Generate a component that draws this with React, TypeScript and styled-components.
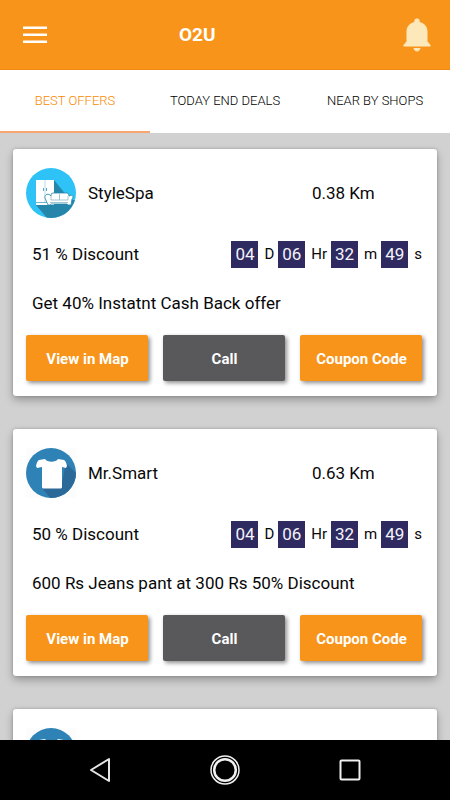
import React from "react";
import styled, { createGlobalStyle } from "styled-components";

const ORANGE = "#f8941a";

const GlobalStyle = createGlobalStyle`
  * { box-sizing: border-box; }
  body { margin: 0; background: #d1d1d1; font-family: Roboto, "Liberation Sans", sans-serif; color: #080808; }
  button { font-family: inherit; border: 0; padding: 0; background: none; cursor: pointer; }
  svg { display: block; }
`;

const Screen = styled.div`
  display: flex;
  flex-direction: column;
  height: 100vh;
`;

const AppBar = styled.header`
  display: grid;
  grid-template-columns: 156px 1fr 28px;
  align-items: center;
  justify-items: start;
  height: 70px;
  flex: none;
  padding: 0 19px 0 23px;
  background: ${ORANGE};
  border-bottom: 1px solid #ee8a12;
`;

const IconButton = styled.button`
  color: #f0f0f0;
`;

const Title = styled.h1`
  margin: 0;
  font-size: 19px;
  line-height: 24px;
  font-weight: 700;
  color: #fff;
`;

const Tabs = styled.nav`
  display: grid;
  grid-template-columns: repeat(3, 1fr);
  height: 63px;
  flex: none;
  background: #fff;
`;

const Tab = styled.button<{ $active?: boolean }>`
  font-size: 13px;
  line-height: 16px;
  font-weight: 300;
  color: ${(p) => (p.$active ? "#f88a00" : "#000")};
  border-bottom: 2px solid ${(p) => (p.$active ? "#f9a570" : "#fff")};
`;

const Offers = styled.main`
  flex: 1;
  min-height: 0;
  overflow: hidden;
  display: flex;
  flex-direction: column;
  gap: 33px;
  padding: 16px 13px;
`;

const Card = styled.article`
  flex: none;
  padding: 19px 15px 15px 13px;
  background: #fff;
  border-radius: 3px;
  box-shadow: 0 4px 8px rgba(0, 0, 0, 0.28), 0 0 3px rgba(0, 0, 0, 0.2);
`;

const CardHead = styled.div`
  display: grid;
  grid-template-columns: 50px 1fr 110px;
  column-gap: 12px;
  align-items: center;
  height: 50px;
`;

const Text = styled.span`
  font-size: 17px;
  line-height: 25px;
`;

const ShopName = styled.h2`
  margin: 0;
  font-size: 17px;
  line-height: 25px;
  font-weight: 400;
`;

const Details = styled.div`
  display: flex;
  justify-content: space-between;
  align-items: center;
  height: 72px;
  padding-left: 6px;
`;

const Countdown = styled.div`
  display: flex;
  align-items: center;
  gap: 4px;
`;

const Slot = styled.span`
  display: flex;
  align-items: center;
  gap: 6px;
  font-size: 15px;
  line-height: 20px;
`;

const Digits = styled.span`
  width: 27px;
  height: 27px;
  font-size: 17px;
  line-height: 27px;
  text-align: center;
  color: #f4f3fa;
  background: #2f2a60;
`;

const Offer = styled.p`
  margin: 0;
  padding-left: 6px;
  font-size: 17px;
  line-height: 27px;
`;

const Actions = styled.div`
  display: grid;
  grid-template-columns: repeat(3, 1fr);
  gap: 15px;
  margin-top: 18px;
`;

const Action = styled.button<{ $dark?: boolean }>`
  height: 46px;
  padding: 2px 0 0 1px;
  font-size: 15px;
  line-height: 20px;
  font-weight: 700;
  color: #fff;
  background: ${(p) => (p.$dark ? "#59595b" : ORANGE)};
  border-radius: 2px;
  box-shadow: 2px 2px 4px rgba(0, 0, 0, 0.45);
`;

const SystemBar = styled.footer`
  display: grid;
  grid-template-columns: repeat(3, 125px);
  justify-content: center;
  align-items: center;
  justify-items: center;
  height: 60px;
  flex: none;
  background: #000;
`;

const SofaLogo = () => (
  <svg width="50" height="50" viewBox="0 0 50 50" aria-hidden="true">
    <defs>
      <clipPath id="sofa-disc"><circle cx="25" cy="25" r="25" /></clipPath>
    </defs>
    <g clipPath="url(#sofa-disc)">
      <rect width="50" height="50" fill="#2fc2f6" />
      <path d="M28 12l13 16 5 4 4 0v18H21L10 37z" fill="#2686aa" />
      <rect x="10" y="12" width="18" height="25" fill="#fff" />
      <path d="M10 34.500h12" stroke="#6fb6cf" />
      <path d="M19 12v22" stroke="#b4dce8" />
      <path d="M17.500 20v3M20.500 20v3" stroke="#5aa6c2" />
      <path d="M19 30c-1-4 4-5 6-2v-1q0-2 2-2h14q2 0 2 3c4-2 5 1 3 3l-1 6h-3l-1-1H25l-1 1h-2z" fill="#fff" stroke="#2686aa" strokeWidth="0.8" />
      <path d="M25 28v4h17v-4M33.500 26v6M24 34.500h18" fill="none" stroke="#8fb8c8" strokeWidth="0.8" />
    </g>
  </svg>
);

const ShirtLogo = () => (
  <svg width="50" height="50" viewBox="0 0 50 50" aria-hidden="true">
    <defs>
      <clipPath id="shirt-disc"><circle cx="25" cy="25" r="25" /></clipPath>
    </defs>
    <rect width="50" height="50" fill="#fcfcfc" />
    <g clipPath="url(#shirt-disc)">
      <rect width="50" height="50" fill="#2f82b6" />
      <path d="M40 15l12 12v25H26L16 40l19-1z" fill="#2a6998" />
      <path d="M19 11l-6 1q-2 1-3 6l1 2 5-1v20q0 1.500 1.500 1.500h17q1.500 0 1.500-1.500V19l4 1 1-2q-1-5-3-6l-6-1c-2 3.500-11 3.500-13 0z" fill="#fff" />
    </g>
  </svg>
);

type Shop = { name: string; distance: string; discount: string; offer: string; logo: React.ReactNode };

const shops: Shop[] = [
  { name: "StyleSpa", distance: "0.38 Km", discount: "51 % Discount", offer: "Get 40% Instatnt Cash Back offer", logo: <SofaLogo /> },
  { name: "Mr.Smart", distance: "0.63 Km", discount: "50 % Discount", offer: "600 Rs Jeans pant at 300 Rs 50% Discount", logo: <ShirtLogo /> },
];

const remaining = [["04", "D"], ["06", "Hr"], ["32", "m"], ["49", "s"]];

const ShopCard = ({ shop }: { shop: Shop }) => (
  <Card>
    <CardHead>
      {shop.logo}
      <ShopName>{shop.name}</ShopName>
      <Text>{shop.distance}</Text>
    </CardHead>
    <Details>
      <Text>{shop.discount}</Text>
      <Countdown>
        {remaining.map(([value, unit]) => (
          <Slot key={unit}><Digits>{value}</Digits>{unit}</Slot>
        ))}
      </Countdown>
    </Details>
    <Offer>{shop.offer}</Offer>
    <Actions>
      <Action>View in Map</Action>
      <Action $dark>Call</Action>
      <Action>Coupon Code</Action>
    </Actions>
  </Card>
);

export default function App() {
  return (
    <Screen>
      <GlobalStyle />
      <AppBar>
        <IconButton aria-label="Menu">
          <svg width="24" height="18" viewBox="0 0 24 18" fill="#fff">
            <path d="M0 0.500h24v2.500H0zM0 7.500h24v2.500H0zM0 14.500h24v2.500H0z" />
          </svg>
        </IconButton>
        <Title>O2U</Title>
        <IconButton aria-label="Notifications">
          <svg width="28" height="34" viewBox="0 0 28 34" fill="#fde8ba">
            <path d="M14 0.500a2.500 2.500 0 0 1 2.500 3.500C21.500 5 24.500 9 24.500 13.500v10l3 3.500q.8 1.500-.8 1.500H1.300Q-.3 28.500 .5 27l3-3.500V13.500c0-4.500 3-8.500 8-9.500A2.500 2.500 0 0 1 14 0.500zM10.500 30h7c-.5 4.500-6.500 4.500-7 0z" />
          </svg>
        </IconButton>
      </AppBar>
      <Tabs>
        <Tab $active aria-current="page">BEST OFFERS</Tab>
        <Tab>TODAY END DEALS</Tab>
        <Tab>NEAR BY SHOPS</Tab>
      </Tabs>
      <Offers>
        {shops.map((shop) => <ShopCard key={shop.name} shop={shop} />)}
        <Card><CardHead><ShirtLogo /></CardHead></Card>
      </Offers>
      <SystemBar>
        <IconButton aria-label="Back">
          <svg width="22" height="26" viewBox="0 0 22 26" fill="none" stroke="#e6e6e6" strokeWidth="2" strokeLinejoin="round">
            <path d="M20 2v22L2 13z" />
          </svg>
        </IconButton>
        <IconButton aria-label="Home">
          <svg width="30" height="30" viewBox="0 0 30 30" fill="none" stroke="#f0f0f0">
            <circle cx="15" cy="15" r="14" strokeWidth="1.500" />
            <circle cx="15" cy="15" r="10.800" strokeWidth="2.500" />
          </svg>
        </IconButton>
        <IconButton aria-label="Recent apps">
          <svg width="22" height="22" viewBox="0 0 22 22" fill="none" stroke="#f0f0f0" strokeWidth="2">
            <rect x="1.500" y="1.500" width="19" height="19" rx="1" />
          </svg>
        </IconButton>
      </SystemBar>
    </Screen>
  );
}
